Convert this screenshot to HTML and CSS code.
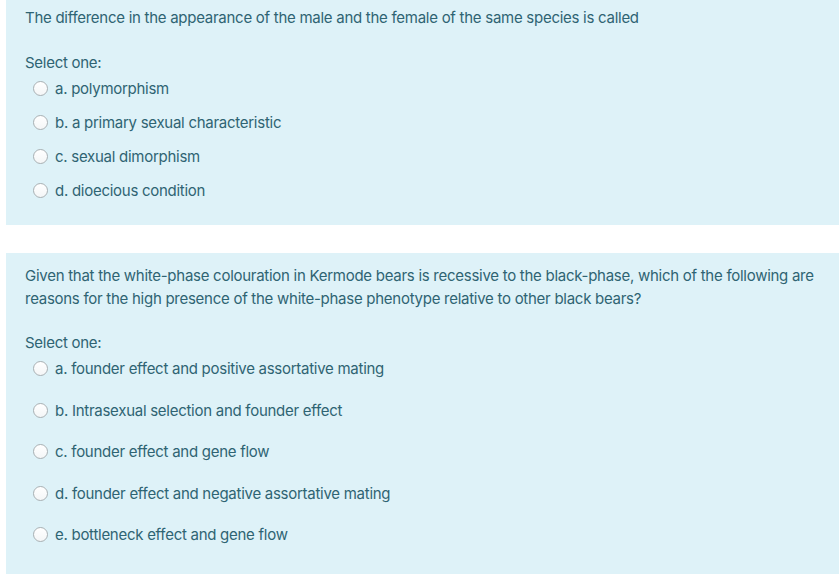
FILE: index.html
```html
<!DOCTYPE html>
<html>
<head>
<meta charset="utf-8">
<link rel="stylesheet" href="styles.css">
</head>
<body>
<div class="page">
  <div class="que que-first">
    <div class="qtext">The difference in the appearance of the male and the female of the same species is called</div>
    <div class="prompt">Select one:</div>
    <div class="answer">
      <div class="opt"><span class="radio"></span><span class="label">a. polymorphism</span></div>
      <div class="opt"><span class="radio"></span><span class="label">b. a primary sexual characteristic</span></div>
      <div class="opt"><span class="radio"></span><span class="label">c. sexual dimorphism</span></div>
      <div class="opt"><span class="radio"></span><span class="label">d. dioecious condition</span></div>
    </div>
  </div>
  <div class="que que-second">
    <div class="qtext">Given that the white-phase colouration in Kermode bears is recessive to the black-phase, which of the following are reasons for the high presence of the white-phase phenotype relative to other black bears?</div>
    <div class="prompt">Select one:</div>
    <div class="answer">
      <div class="opt"><span class="radio"></span><span class="label">a. founder effect and positive assortative mating</span></div>
      <div class="opt"><span class="radio"></span><span class="label">b. Intrasexual selection and founder effect</span></div>
      <div class="opt"><span class="radio"></span><span class="label">c. founder effect and gene flow</span></div>
      <div class="opt"><span class="radio"></span><span class="label">d. founder effect and negative assortative mating</span></div>
      <div class="opt"><span class="radio"></span><span class="label">e. bottleneck effect and gene flow</span></div>
    </div>
  </div>
</div>
</body>
</html>
```

FILE: styles.css
```css
html, body {
  margin: 0;
  padding: 0;
  background: #ffffff;
  overflow: hidden;
}
.page {
  padding-left: 6px;
  font-family: Inter, "Liberation Sans", sans-serif;
  font-size: 15px;
  letter-spacing: -0.27px;
  line-height: 23px;
  color: #2f6473;
}
.que {
  background: #def2f8;
  padding: 0 19px;
}
.que-first {
  padding-top: 6px;
  padding-bottom: 12px;
  margin-bottom: 28px;
}
.que-second {
  padding-top: 11px;
  padding-bottom: 40px;
}
.prompt {
  margin-top: 22px;
}
.que-second .prompt {
  margin-top: 21px;
}
.answer {
  margin-top: 3px;
}
.opt {
  display: flex;
  align-items: center;
  padding-left: 8px;
  margin-bottom: 11px;
}
.que-second .opt {
  margin-bottom: 18.5px;
}
.radio {
  width: 13px;
  height: 13px;
  border: 1px solid #a9b0b3;
  border-radius: 50%;
  background: linear-gradient(#ffffff, #f4f6f7);
  box-sizing: content-box;
  margin-right: 7px;
  flex: none;
}
```
